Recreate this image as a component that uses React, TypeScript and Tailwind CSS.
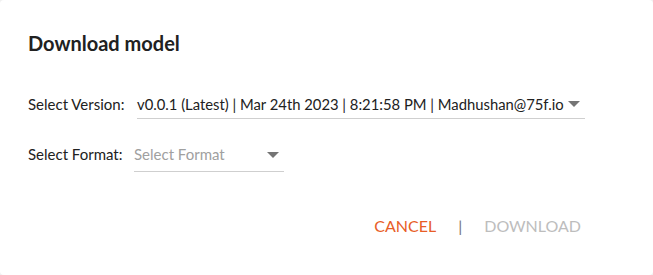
import { useState } from 'react';

function Caret() {
  return (
    <svg width="12" height="6" viewBox="0 0 12 6" className="shrink-0">
      <path d="M0 0h12L6 6z" fill="#757575" />
    </svg>
  );
}

export default function App() {
  const [format] = useState('');
  return (
    <div
      className="h-[275px] w-[653px] bg-[#f0f0f0]"
      style={{ fontFamily: 'Lato, "Noto Sans", sans-serif' }}
    >
      <div className="flex h-full flex-col rounded-[4px] bg-white text-[#212121]">
        <h2 className="px-[28px] pt-[30px] text-[20px] font-bold leading-[26px] text-[#212121]">
          Download model
        </h2>

        <div className="mt-[34px] flex items-center px-[28px] text-[15px]">
          <span className="w-[109px] shrink-0 text-[#212121]">Select Version:</span>
          <div className="flex h-[29px] w-[448px] items-center border-b border-[#cfcfcf] pr-[5px]">
            <span className="flex-1 whitespace-nowrap text-[14.8px] text-[#212121]">
              v0.0.1 (Latest) | Mar 24th 2023 | 8:21:58 PM | Madhushan@75f.io
            </span>
            <Caret />
          </div>
        </div>

        <div className="mt-[22px] flex items-start px-[28px] text-[15px]">
          <span className="w-[106px] shrink-0 pt-[3px] leading-[20px] text-[#212121]">Select Format:</span>
          <div className="flex h-[31px] w-[150px] items-start border-b border-[#cfcfcf] pr-[5px] pt-[3px]">
            <span className="flex-1 leading-[20px] text-[#a0a0a0]">{format || 'Select Format'}</span>
            <span className="pt-[8px]">
              <Caret />
            </span>
          </div>
        </div>

        <div className="mt-[42px] flex items-center justify-end pr-[72px] text-[16px]">
          <button className="text-[#e85d27]">CANCEL</button>
          <span className="mx-[22px] text-[#757575]">|</span>
          <button className="text-[#bdbdbd]">DOWNLOAD</button>
        </div>
      </div>
    </div>
  );
}
